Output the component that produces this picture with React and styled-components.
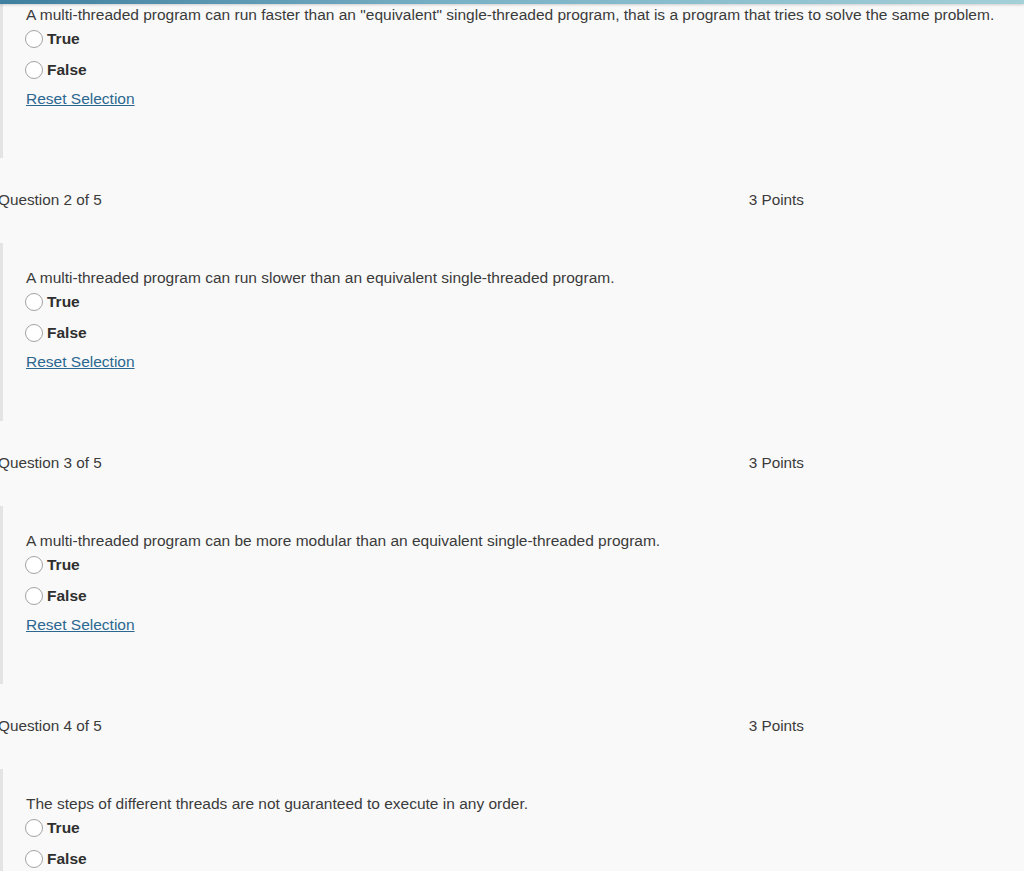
import React, { useState } from 'react';
import styled, { createGlobalStyle } from 'styled-components';

const GlobalStyle = createGlobalStyle`
  html, body {
    margin: 0;
    padding: 0;
    background: #f9f9f9;
    overflow: hidden;
  }
  body {
    font-family: "Liberation Sans", Arial, sans-serif;
    color: #3b3b3b;
  }
`;

const questions = [
  {
    text: 'A multi-threaded program can run faster than an "equivalent" single-threaded program, that is a program that tries to solve the same problem.',
  },
  { text: 'A multi-threaded program can run slower than an equivalent single-threaded program.' },
  { text: 'A multi-threaded program can be more modular than an equivalent single-threaded program.' },
  { text: 'The steps of different threads are not guaranteed to execute in any order.' },
];

export default function App() {
  const [answers, setAnswers] = useState({});

  return (
    <>
      <GlobalStyle />
      <TopBar />
      <Page>
        {questions.map((q, i) => (
          <div key={i}>
            {i > 0 && (
              <QuestionHead>
                <span>Question {i + 1} of 5</span>
                <span>3 Points</span>
              </QuestionHead>
            )}
            <QuestionBlock>
              <Prompt>{q.text}</Prompt>
              {['True', 'False'].map((opt) => (
                <Option key={opt} onClick={() => setAnswers({ ...answers, [i]: opt })}>
                  <Radio checked={answers[i] === opt} />
                  <OptionLabel>{opt}</OptionLabel>
                </Option>
              ))}
              <ResetLink href="#" onClick={(e) => { e.preventDefault(); setAnswers({ ...answers, [i]: null }); }}>
                Reset Selection
              </ResetLink>
            </QuestionBlock>
          </div>
        ))}
      </Page>
    </>
  );
}

const TopBar = styled.div`
  position: fixed;
  top: 0;
  left: 0;
  right: 0;
  height: 4px;
  background: linear-gradient(to right, #3f7f9f 0%, #79b1c6 45%, #a4d0d8 100%);
  box-shadow: 0 1px 3px rgba(0, 0, 0, 0.18);
  z-index: 2;
`;

const Page = styled.div`
  margin-top: -20px;
  width: 1024px;
`;

const QuestionHead = styled.div`
  display: flex;
  justify-content: space-between;
  width: 806px;
  margin-left: -2px;
  padding: 32px 0 33px;
  font-size: 15.3px;
  line-height: 20px;
  color: #3b3b3b;
`;

const QuestionBlock = styled.div`
  border-left: 3px solid #e4e4e4;
  padding: 25px 0 49px 23px;
`;

const Prompt = styled.div`
  font-size: 15.5px;
  line-height: 20px;
  margin-bottom: -2px;
  color: #3b3b3b;
  white-space: nowrap;
`;

const Option = styled.label`
  display: flex;
  align-items: center;
  height: 31px;
  cursor: pointer;
`;

const Radio = styled.span`
  box-sizing: border-box;
  width: 18px;
  height: 18px;
  margin-left: -1px;
  border-radius: 50%;
  border: 1px solid #a3a3a3;
  background: ${(p) => (p.checked ? 'radial-gradient(circle, #333 0 4px, #fff 5px)' : '#fff')};
  flex-shrink: 0;
`;

const OptionLabel = styled.span`
  margin-left: 4px;
  font-size: 15.5px;
  font-weight: 700;
  color: #2f2f2f;
`;

const ResetLink = styled.a`
  display: inline-block;
  margin-top: 4px;
  font-size: 15.5px;
  line-height: 20px;
  color: #2b6790;
  text-decoration: underline;
`;
